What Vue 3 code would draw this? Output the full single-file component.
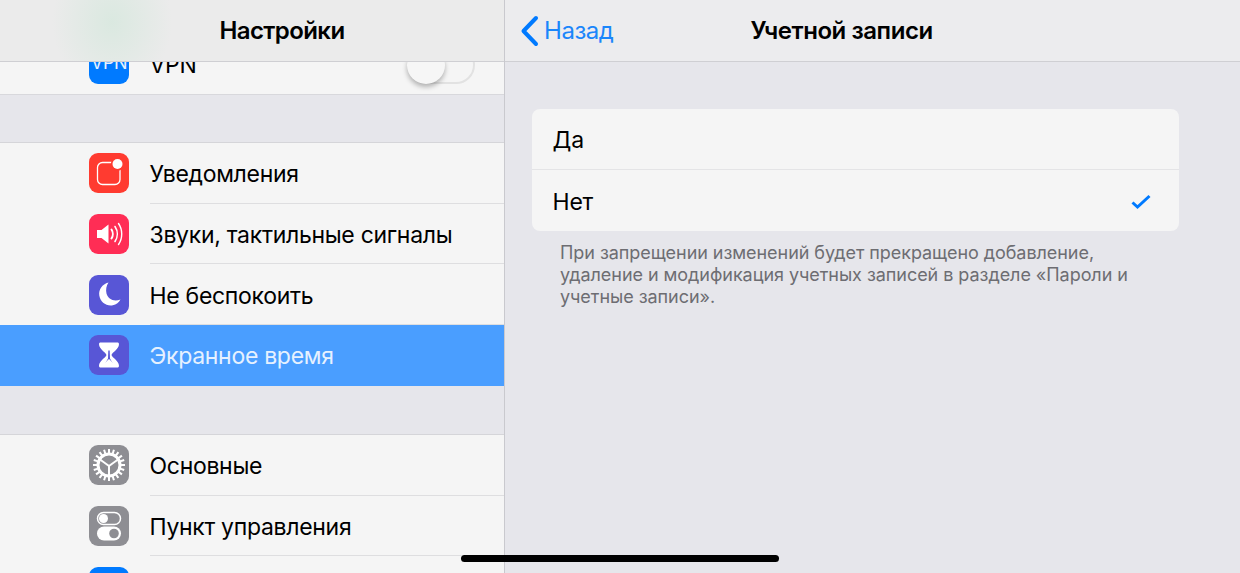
<template>
  <div class="screen">
    <aside class="sidebar">
      <header class="nav nav-left">
        <h1 class="nav-title">Настройки</h1>
      </header>

      <div class="list">
        <div class="row row-vpn">
          <span class="icon icon-vpn"><span class="vpn-text">VPN</span></span>
          <span class="row-label">VPN</span>
          <span class="toggle"><span class="knob"></span></span>
        </div>

        <div class="gap"></div>

        <div
          v-for="item in firstGroup"
          :key="item.label"
          class="row"
          :class="{ selected: item.selected }"
        >
          <span class="icon" :class="item.icon">
            <svg v-if="item.icon === 'icon-notify'" viewBox="0 0 40 40" width="40" height="40">
              <rect x="8.500" y="9.500" width="22.500" height="22" rx="5" fill="none" stroke="#fff" stroke-width="1.300" />
              <circle cx="28.500" cy="11" r="6.800" fill="#ff3b30" />
              <circle cx="28.500" cy="11" r="5" fill="#fff" />
            </svg>
            <svg v-else-if="item.icon === 'icon-sound'" viewBox="0 0 40 40" width="40" height="40">
              <path d="M8 16h4.500L19.500 10.500v19L12.500 24H8z" fill="#fff" />
              <g fill="none" stroke="#fff" stroke-linecap="round">
                <path d="M22.500 15.500c1.700 2.500 1.700 6.500 0 9" stroke-width="2" />
                <path d="M26 12.500c3 4.500 3 10.500 0 15" stroke-width="1.600" />
                <path d="M29.500 9.500c4.300 6 4.300 15 0 21" stroke-width="1.400" />
              </g>
            </svg>
            <svg v-else-if="item.icon === 'icon-moon'" viewBox="0 0 40 40" width="40" height="40">
              <path d="M19.500 7.500c-6.500 1.800-10 7-9.200 13 .9 6.500 7 11 13.500 9.800 3.500-.7 6.200-2.700 7.700-5.800-7 2.500-12.500-.5-14-6-.9-3.700-.2-7.700 2-11z" fill="#fff" />
            </svg>
            <svg v-else viewBox="0 0 40 40" width="40" height="40">
              <path d="M11.500 7.500c-.8 0-1.500.7-1.500 1.500 0 5.500 6.800 8 7.500 11-.7 3-7.500 5.500-7.500 11 0 .8.700 1.500 1.500 1.500h17c.8 0 1.500-.7 1.500-1.500 0-5.500-6.800-8-7.500-11 .7-3 7.500-5.500 7.500-11 0-.8-.7-1.500-1.500-1.500z" fill="#fff" />
              <path d="M19.300 15.500h1.400l.3 8 2.500 4.500h-7l2.500-4.500z" fill="#5856d6" />
              <path d="M15 29.500c2-3 3.500-4 5-5.500 1.500 1.500 3 2.500 5 5.500z" fill="#fff" />
            </svg>
          </span>
          <span class="row-label">{{ item.label }}</span>
        </div>

        <div class="gap gap-second"></div>

        <div v-for="item in secondGroup" :key="item.label" class="row">
          <span class="icon" :class="item.icon">
            <svg v-if="item.icon === 'icon-gear'" viewBox="0 0 40 40" width="40" height="40">
              <g stroke="#fff" stroke-width="2">
                <line
                  v-for="angle in gearTeeth"
                  :key="angle"
                  x1="20"
                  y1="4"
                  x2="20"
                  y2="10"
                  :transform="`rotate(${angle} 20 20)`"
                />
              </g>
              <circle cx="20" cy="20" r="11" fill="none" stroke="#fff" stroke-width="3" />
              <g stroke="#fff" stroke-width="2">
                <line x1="20" y1="21" x2="20" y2="31" />
                <line x1="20" y1="21" x2="11" y2="14.500" />
                <line x1="20" y1="21" x2="29" y2="14.500" />
              </g>
            </svg>
            <svg v-else-if="item.icon === 'icon-control'" viewBox="0 0 40 40" width="40" height="40">
              <rect x="8.500" y="6.500" width="23" height="12" rx="6" fill="none" stroke="#fff" stroke-width="1.500" />
              <circle cx="14.500" cy="12.500" r="4.500" fill="#fff" />
              <rect x="8" y="20.500" width="24" height="14" rx="7" fill="#fff" />
              <circle cx="25" cy="27.500" r="4.800" fill="#8e8e93" />
            </svg>
          </span>
          <span class="row-label">{{ item.label }}</span>
        </div>
      </div>
    </aside>

    <main class="detail">
      <header class="nav nav-right">
        <a class="back">
          <svg viewBox="0 0 20 32" width="20" height="32">
            <path d="M16 3 3.500 16 16 29" fill="none" stroke="#007aff" stroke-width="4" stroke-linecap="round" stroke-linejoin="round" />
          </svg>
          <span>Назад</span>
        </a>
        <h2 class="nav-title detail-title">Учетной записи</h2>
      </header>

      <div class="content">
        <div class="card">
          <div class="option">Да</div>
          <div class="option option-last">
            Нет
            <svg class="check" viewBox="0 0 20 16" width="20" height="16">
              <path d="M1.500 8.500 6.500 13 18.500 2" fill="none" stroke="#007aff" stroke-width="3" />
            </svg>
          </div>
        </div>
        <p class="note">
          При запрещении изменений будет прекращено добавление,
          удаление и модификация учетных записей в разделе «Пароли и
          учетные записи».
        </p>
      </div>
    </main>

    <div class="home-bar"></div>
  </div>
</template>

<script setup>
const firstGroup = [
  { label: 'Уведомления', icon: 'icon-notify' },
  { label: 'Звуки, тактильные сигналы', icon: 'icon-sound' },
  { label: 'Не беспокоить', icon: 'icon-moon' },
  { label: 'Экранное время', icon: 'icon-time', selected: true }
]

const secondGroup = [
  { label: 'Основные', icon: 'icon-gear' },
  { label: 'Пункт управления', icon: 'icon-control' },
  { label: '', icon: 'icon-blue' }
]

const gearTeeth = Array.from({ length: 20 }, (_, i) => i * 18)
</script>

<style scoped>
.screen {
  position: relative;
  display: flex;
  width: 1240px;
  height: 573px;
  overflow: hidden;
  background: #e6e6eb;
  font-family: Inter, "Liberation Sans", sans-serif;
  color: #000;
}
.sidebar {
  flex: none;
  display: flex;
  flex-direction: column;
  width: 504px;
  height: 573px;
  border-right: 1px solid #c9c9ce;
}
.detail {
  flex: 1;
  display: flex;
  flex-direction: column;
  min-width: 0;
}
.nav {
  position: relative;
  z-index: 1;
  flex: none;
  display: flex;
  align-items: center;
  height: 62px;
  box-sizing: border-box;
  border-bottom: 1px solid #cfcfd3;
  background: #ececec;
}
.nav-left {
  justify-content: center;
  padding-left: 60px;
  background:
    radial-gradient(ellipse 60px 70px at 112px 22px, rgba(215, 232, 222, 0.85), rgba(226, 232, 232, 0) 100%),
    #ebebeb;
}
.nav-left .nav-title {
  letter-spacing: -0.6px;
}
.nav-right {
  padding-left: 15px;
  background: #ececee;
}
.nav-title {
  margin: 0;
  font-size: 24px;
  font-weight: 600;
  letter-spacing: -0.45px;
}
.detail-title {
  margin-left: 137px;
}
.back {
  display: flex;
  align-items: center;
  gap: 4px;
  font-size: 24px;
  letter-spacing: -0.45px;
  color: #1a86fb;
}
.list {
  flex: 1;
  min-height: 0;
  overflow: hidden;
}
.row {
  position: relative;
  display: flex;
  align-items: center;
  height: 60.67px;
  box-sizing: border-box;
  background: #f5f5f5;
}
.row::after {
  content: "";
  position: absolute;
  left: 150px;
  right: 0;
  bottom: 0;
  height: 1px;
  background: #dedee0;
}
.row-vpn {
  height: 61px;
  margin-top: -28px;
  border-bottom: 1px solid #d8d8dc;
}
.row-vpn::after,
.selected::after {
  display: none;
}
.row-label {
  margin-top: 2px;
  font-size: 23px;
  letter-spacing: -0.3px;
  line-height: 30px;
}
.selected {
  background: #4a9eff;
  color: #e6f1ff;
}
.icon {
  flex: none;
  display: block;
  width: 40px;
  height: 40px;
  margin: 0 20.5px 0 89px;
  border-radius: 9px;
  overflow: hidden;
}
.icon svg {
  display: block;
}
.icon-vpn,
.icon-blue {
  background: #007aff;
}
.vpn-text {
  display: block;
  padding-top: 9px;
  text-align: center;
  font-size: 18px;
  line-height: 20px;
  color: #e5f1ff;
  letter-spacing: -0.4px;
}
.icon-notify {
  background: #ff3b30;
}
.icon-sound {
  background: #ff2d55;
}
.icon-moon,
.icon-time {
  background: #5856d6;
}
.icon-gear,
.icon-control {
  background: #8e8e93;
}
.toggle {
  position: absolute;
  top: 12px;
  left: 407px;
  width: 68px;
  height: 38px;
  box-sizing: border-box;
  border: 2px solid #e2e2e2;
  border-radius: 20px;
}
.knob {
  position: absolute;
  top: -1px;
  left: -2px;
  width: 38px;
  height: 37px;
  border-radius: 50%;
  background: #f6f6f6;
  box-shadow: 0 3px 5px rgba(0, 0, 0, 0.28);
}
.gap {
  height: 48px;
  box-sizing: border-box;
  background: #e6e6eb;
  border-bottom: 1px solid #d5d5d9;
}
.gap-second {
  height: 49.33px;
}
.content {
  padding: 47px 61px 0 27px;
}
.card {
  background: #f5f5f5;
  border-radius: 8px;
  overflow: hidden;
}
.option {
  display: flex;
  align-items: center;
  justify-content: space-between;
  height: 61px;
  box-sizing: border-box;
  padding: 2px 28px 0 20.5px;
  font-size: 23px;
  letter-spacing: -0.2px;
  border-bottom: 1px solid #e4e4e6;
}
.option-last {
  border-bottom: 0;
}
.note {
  margin: 11px 0 0;
  padding: 0 28px;
  font-size: 18px;
  line-height: 22px;
  letter-spacing: -0.05px;
  color: #6d6d72;
}
.home-bar {
  position: absolute;
  left: 461px;
  top: 555px;
  z-index: 2;
  width: 318px;
  height: 7px;
  border-radius: 4px;
  background: #000;
}
</style>

<style>
html,
body {
  margin: 0;
  background: #e6e6eb;
}
</style>
